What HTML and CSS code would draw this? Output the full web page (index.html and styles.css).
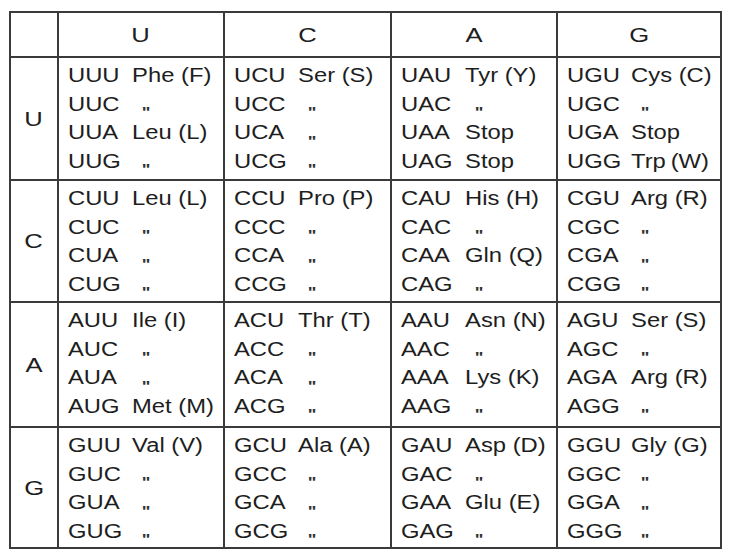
FILE: index.html
```html
<!DOCTYPE html>
<html>
<head>
<meta charset="utf-8">
<link rel="stylesheet" href="styles.css">
</head>
<body>
<div class="table">
  <div class="cell corner"></div>
  <div class="cell head"><span class="big">U</span></div>
  <div class="cell head"><span class="big">C</span></div>
  <div class="cell head"><span class="big">A</span></div>
  <div class="cell head"><span class="big">G</span></div>

  <div class="cell side"><span class="big">U</span></div>
  <div class="cell body">
    <div class="ln"><span class="cd">UUU</span>Phe (F)</div>
    <div class="ln"><span class="cd">UUC</span><span class="dt">"</span></div>
    <div class="ln"><span class="cd">UUA</span>Leu (L)</div>
    <div class="ln"><span class="cd">UUG</span><span class="dt">"</span></div>
  </div>
  <div class="cell body">
    <div class="ln"><span class="cd">UCU</span>Ser (S)</div>
    <div class="ln"><span class="cd">UCC</span><span class="dt">"</span></div>
    <div class="ln"><span class="cd">UCA</span><span class="dt">"</span></div>
    <div class="ln"><span class="cd">UCG</span><span class="dt">"</span></div>
  </div>
  <div class="cell body">
    <div class="ln"><span class="cd">UAU</span>Tyr (Y)</div>
    <div class="ln"><span class="cd">UAC</span><span class="dt">"</span></div>
    <div class="ln"><span class="cd">UAA</span>Stop</div>
    <div class="ln"><span class="cd">UAG</span>Stop</div>
  </div>
  <div class="cell body">
    <div class="ln"><span class="cd">UGU</span>Cys (C)</div>
    <div class="ln"><span class="cd">UGC</span><span class="dt">"</span></div>
    <div class="ln"><span class="cd">UGA</span>Stop</div>
    <div class="ln"><span class="cd">UGG</span><span class="tight">Trp (W)</span></div>
  </div>

  <div class="cell side"><span class="big">C</span></div>
  <div class="cell body">
    <div class="ln"><span class="cd">CUU</span>Leu (L)</div>
    <div class="ln"><span class="cd">CUC</span><span class="dt">"</span></div>
    <div class="ln"><span class="cd">CUA</span><span class="dt">"</span></div>
    <div class="ln"><span class="cd">CUG</span><span class="dt">"</span></div>
  </div>
  <div class="cell body">
    <div class="ln"><span class="cd">CCU</span>Pro (P)</div>
    <div class="ln"><span class="cd">CCC</span><span class="dt">"</span></div>
    <div class="ln"><span class="cd">CCA</span><span class="dt">"</span></div>
    <div class="ln"><span class="cd">CCG</span><span class="dt">"</span></div>
  </div>
  <div class="cell body">
    <div class="ln"><span class="cd">CAU</span>His (H)</div>
    <div class="ln"><span class="cd">CAC</span><span class="dt">"</span></div>
    <div class="ln"><span class="cd">CAA</span>Gln (Q)</div>
    <div class="ln"><span class="cd">CAG</span><span class="dt">"</span></div>
  </div>
  <div class="cell body">
    <div class="ln"><span class="cd">CGU</span>Arg (R)</div>
    <div class="ln"><span class="cd">CGC</span><span class="dt">"</span></div>
    <div class="ln"><span class="cd">CGA</span><span class="dt">"</span></div>
    <div class="ln"><span class="cd">CGG</span><span class="dt">"</span></div>
  </div>

  <div class="cell side"><span class="big">A</span></div>
  <div class="cell body">
    <div class="ln"><span class="cd">AUU</span>Ile (I)</div>
    <div class="ln"><span class="cd">AUC</span><span class="dt">"</span></div>
    <div class="ln"><span class="cd">AUA</span><span class="dt">"</span></div>
    <div class="ln"><span class="cd">AUG</span>Met (M)</div>
  </div>
  <div class="cell body">
    <div class="ln"><span class="cd">ACU</span>Thr (T)</div>
    <div class="ln"><span class="cd">ACC</span><span class="dt">"</span></div>
    <div class="ln"><span class="cd">ACA</span><span class="dt">"</span></div>
    <div class="ln"><span class="cd">ACG</span><span class="dt">"</span></div>
  </div>
  <div class="cell body">
    <div class="ln"><span class="cd">AAU</span>Asn (N)</div>
    <div class="ln"><span class="cd">AAC</span><span class="dt">"</span></div>
    <div class="ln"><span class="cd">AAA</span>Lys (K)</div>
    <div class="ln"><span class="cd">AAG</span><span class="dt">"</span></div>
  </div>
  <div class="cell body">
    <div class="ln"><span class="cd">AGU</span>Ser (S)</div>
    <div class="ln"><span class="cd">AGC</span><span class="dt">"</span></div>
    <div class="ln"><span class="cd">AGA</span>Arg (R)</div>
    <div class="ln"><span class="cd">AGG</span><span class="dt">"</span></div>
  </div>

  <div class="cell side"><span class="big">G</span></div>
  <div class="cell body">
    <div class="ln"><span class="cd">GUU</span>Val (V)</div>
    <div class="ln"><span class="cd">GUC</span><span class="dt">"</span></div>
    <div class="ln"><span class="cd">GUA</span><span class="dt">"</span></div>
    <div class="ln"><span class="cd">GUG</span><span class="dt">"</span></div>
  </div>
  <div class="cell body">
    <div class="ln"><span class="cd">GCU</span>Ala (A)</div>
    <div class="ln"><span class="cd">GCC</span><span class="dt">"</span></div>
    <div class="ln"><span class="cd">GCA</span><span class="dt">"</span></div>
    <div class="ln"><span class="cd">GCG</span><span class="dt">"</span></div>
  </div>
  <div class="cell body">
    <div class="ln"><span class="cd">GAU</span>Asp (D)</div>
    <div class="ln"><span class="cd">GAC</span><span class="dt">"</span></div>
    <div class="ln"><span class="cd">GAA</span>Glu (E)</div>
    <div class="ln"><span class="cd">GAG</span><span class="dt">"</span></div>
  </div>
  <div class="cell body">
    <div class="ln"><span class="cd">GGU</span>Gly (G)</div>
    <div class="ln"><span class="cd">GGC</span><span class="dt">"</span></div>
    <div class="ln"><span class="cd">GGA</span><span class="dt">"</span></div>
    <div class="ln"><span class="cd">GGG</span><span class="dt">"</span></div>
  </div>
</div>
</body>
</html>
```

FILE: styles.css
```css
html, body {
  margin: 0;
  padding: 0;
  background: #ffffff;
}

body {
  padding: 11px 0 0 9px;
  font-family: "Liberation Sans", Arial, sans-serif;
  color: #1e1e1e;
}

.table {
  display: grid;
  width: 713px;
  box-sizing: border-box;
  grid-template-columns: 46px 164px 165px 164px 162px;
  grid-template-rows: 43px 121px 120px 123px 119px;
  gap: 2px;
  padding: 2px;
  background: #3a3a3a;
}

.cell {
  background: #ffffff;
}

.head, .side {
  display: flex;
  align-items: center;
  justify-content: center;
}

.big {
  display: inline-block;
  font-size: 21px;
  transform: scaleX(1.22);
}

.head .big {
  margin-top: 1px;
}

.body {
  padding: 3px 0 0 9px;
  font-size: 19.5px;
}

.ln {
  height: 28.5px;
  line-height: 28.5px;
  white-space: pre;
  transform: scaleX(1.22);
  transform-origin: left center;
}

.cd {
  display: inline-block;
  width: 52.5px;
}

.tight {
  word-spacing: -1.5px;
}

.dt {
  margin-left: 8px;
  font-size: 15px;
  font-weight: bold;
  color: #333333;
  vertical-align: -6.5px;
  line-height: 0;
}
```
